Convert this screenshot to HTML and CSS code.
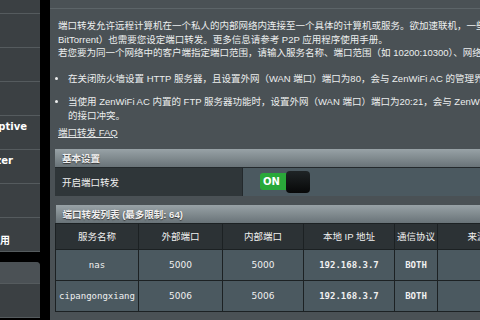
FILE: index.html
```html
<!DOCTYPE html>
<html lang="zh-CN">

<head>
    <meta charset="UTF-8">
    <meta name="viewport" content="width=device-width, initial-scale=1.0">
    <title>端口转发</title>
    <link rel="stylesheet" href="styles.css">
</head>

<body>
    <div class="page">
        <nav class="menu">
            <div class="menu-group">
                <div class="menu-item"></div>
                <div class="menu-item"></div>
                <div class="menu-item"></div>
                <div class="menu-item"></div>
                <div class="menu-item menu-item--adaptive"><span>Adaptive</span></div>
                <div class="menu-item menu-item--analyzer"><span>Analyzer</span></div>
                <div class="menu-item"></div>
                <div class="menu-item menu-item--app"><span>网络应用</span></div>
            </div>
            <div class="menu-group menu-group--second">
                <div class="menu-title"></div>
                <div class="menu-item"></div>
            </div>
        </nav>

        <main class="content">
            <div class="intro">
                <p class="desc">
                    端口转发允许远程计算机在一个私人的内部网络内连接至一个具体的计算机或服务。欲加速联机，一些 P2P 应用程序（如<br>
                    BitTorrent）也需要您设定端口转发。更多信息请参考 P2P 应用程序使用手册。<br>
                    若您要为同一个网络中的客户端指定端口范围，请输入服务名称、端口范围（如 10200:10300）、网络 IP 地址，并保留本地端口空白。
                </p>
                <ul class="notes">
                    <li>在关闭防火墙设置 HTTP 服务器，且设置外网（WAN 端口）端口为80，会与 ZenWiFi AC 的管理界面服务冲突。</li>
                    <li>当使用 ZenWiFi AC 内置的 FTP 服务器功能时，设置外网（WAN 端口）端口为20:21，会与 ZenWiFi AC 内置的 FTP<br>的接口冲突。</li>
                </ul>
                <a class="faq" href="#">端口转发 FAQ</a>
            </div>

            <table class="box basic">
                <tr>
                    <th colspan="2" class="box-title">基本设置</th>
                </tr>
                <tr>
                    <td class="label">开启端口转发</td>
                    <td class="value">
                        <div class="switch">
                            <span class="switch-on">ON</span>
                            <span class="switch-knob"></span>
                        </div>
                    </td>
                </tr>
            </table>

            <table class="box rules">
                <colgroup>
                    <col class="c-name">
                    <col class="c-ext">
                    <col class="c-int">
                    <col class="c-ip">
                    <col class="c-proto">
                    <col class="c-src">
                </colgroup>
                <tr>
                    <th colspan="6" class="box-title">端口转发列表 (最多限制: 64)</th>
                </tr>
                <tr class="cols">
                    <td>服务名称</td>
                    <td>外部端口</td>
                    <td>内部端口</td>
                    <td>本地 IP 地址</td>
                    <td>通信协议</td>
                    <td>来源目标</td>
                </tr>
                <tr class="row">
                    <td>nas</td>
                    <td class="port">5000</td>
                    <td class="port">5000</td>
                    <td class="ip">192.168.3.7</td>
                    <td class="proto">BOTH</td>
                    <td></td>
                </tr>
                <tr class="row">
                    <td>cipangongxiang</td>
                    <td class="port">5006</td>
                    <td class="port">5006</td>
                    <td class="ip">192.168.3.7</td>
                    <td class="proto">BOTH</td>
                    <td></td>
                </tr>
            </table>
        </main>
    </div>
</body>

</html>
```

FILE: styles.css
```css
body {
    margin: 0;
    padding: 0;
    background-color: #000;
    font-family: "Liberation Sans", "Noto Sans CJK SC", sans-serif;
}

.page {
    display: flex;
    width: 480px;
    height: 320px;
    overflow: hidden;
}

/* left menu, only its right edge is in view */
.menu {
    width: 40px;
    flex-shrink: 0;
    margin-right: 10px;
}

.menu-group {
    margin-top: -20px;
    background-color: #3b4043;
}

.menu-item {
    height: 28px;
    padding-top: 5px;
    border-bottom: 1px solid #555b5e;
    display: flex;
    justify-content: flex-end;
    overflow: hidden;
    white-space: nowrap;
    color: #fff;
    font-family: "DejaVu Sans", "Noto Sans CJK SC", sans-serif;
    font-weight: bold;
    font-size: 10px;
}

.menu-item--adaptive {
    padding-right: 13px;
}

.menu-item--analyzer {
    padding-right: 27px;
}

.menu-item--app {
    padding-top: 14px;
    height: 19px;
    padding-right: 30px;
}

.menu-group--second {
    margin-top: 10px;
    border-top-right-radius: 4px;
}

.menu-title {
    height: 21px;
    background-color: #4b5155;
    border-top-right-radius: 4px;
    border-bottom: 1px solid #555b5e;
}

/* main panel */
.content {
    flex: 1;
    background-color: #4a5155;
    padding-top: 8px;
    padding-left: 5px;
    min-width: 0;
}

.intro {
    border-top: 1px solid #5c6468;
    margin-left: -5px;
    padding: 10px 0 0 8px;
    color: #eceeee;
    font-size: 9.5px;
    white-space: nowrap;
}

.desc {
    margin: 0;
    line-height: 13.5px;
}

.notes {
    margin: 12px 0 0 0;
    padding: 0 0 0 10px;
    line-height: 14px;
}

.notes li {
    margin-bottom: 9px;
}

.notes li:last-child {
    margin-bottom: 0;
}

.faq {
    display: inline-block;
    margin-top: 3px;
    color: #e6e8e8;
    text-decoration: underline;
    line-height: 14px;
}

.box {
    border-collapse: collapse;
    white-space: nowrap;
    color: #f0f0f0;
    font-size: 9.5px;
}

.box td,
.box th {
    padding: 0;
}

.box-title {
    height: 18px;
    padding-left: 7px !important;
    text-align: left;
    font-weight: bold;
    background: linear-gradient(#98a2a6, #697378);
    text-shadow: 0 1px 1px #333;
}

.basic {
    width: 470px;
    margin-top: 9px;
}

.basic td {
    height: 28px;
    border-top: 1px solid #23292c;
}

.label {
    width: 180px;
    padding-left: 7px !important;
    background-color: #2f3639;
    border-right: 1px solid #23292c;
}

.value {
    background-color: #4b5960;
    padding-left: 17px !important;
}

.switch {
    display: flex;
    align-items: center;
    width: 50px;
}

.switch-on {
    width: 28px;
    height: 17px;
    line-height: 17px;
    padding-left: 3px;
    box-sizing: border-box;
    background-color: #2aa83a;
    border-radius: 3px 0 0 3px;
    color: #fff;
    font-weight: bold;
    font-size: 10px;
    font-family: "DejaVu Sans", sans-serif;
}

.switch-knob {
    width: 24px;
    height: 22px;
    margin-left: -2px;
    border-radius: 4px;
    background: linear-gradient(#1f2426, #070808);
}

.rules {
    width: 480px;
    margin-top: 9px;
    text-align: center;
    table-layout: fixed;
}

.c-name {
    width: 83px;
}

.c-ext {
    width: 84px;
}

.c-int {
    width: 81px;
}

.c-ip {
    width: 91px;
}

.c-proto {
    width: 43px;
}

.c-src {
    width: 98px;
}

.rules td {
    border: 1px solid #1c2123;
}

.cols td {
    height: 25px;
    background-color: #2c3235;
}

.row td {
    height: 30px;
    background-color: #4b5960;
    font-family: "DejaVu Sans Mono", monospace;
    font-size: 9px;
}

.row .port {
    font-family: "DejaVu Sans", sans-serif;
}

.row .ip,
.row .proto {
    font-weight: bold;
}
```
